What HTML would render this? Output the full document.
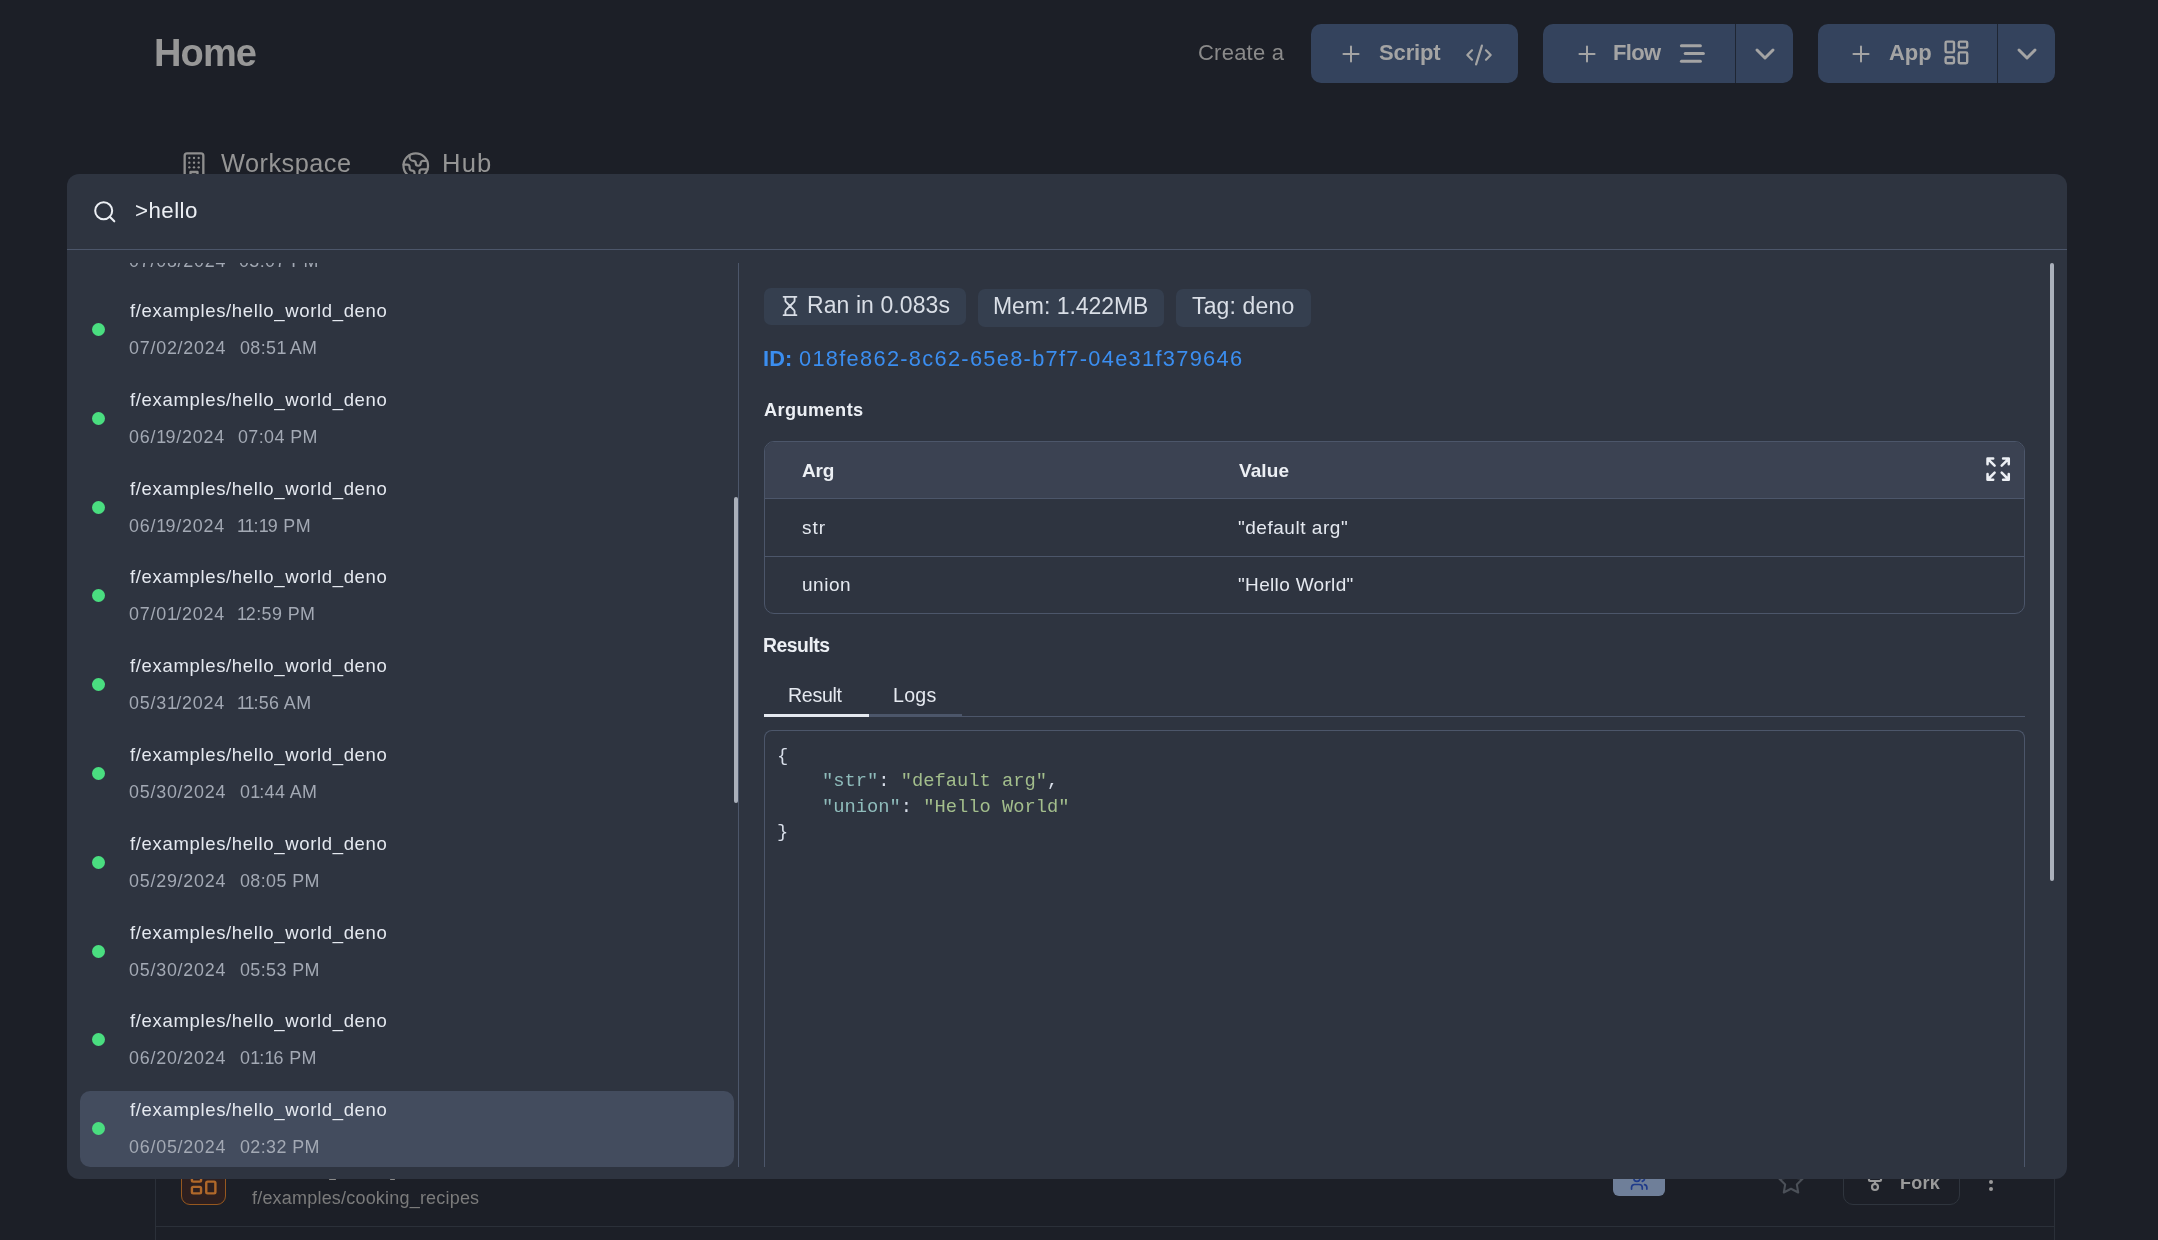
<!DOCTYPE html>
<html><head><meta charset="utf-8"><style>
html,body{margin:0;padding:0;width:2158px;height:1240px;overflow:hidden;background:#1c1f27;font-family:'Liberation Sans', sans-serif;}
.t{position:absolute;white-space:nowrap;line-height:1;will-change:transform;}
.b{position:absolute;box-sizing:border-box;}
svg.b{overflow:visible}
</style></head><body>
<div class="t" style="left:154.20px;top:34.00px;font-size:38px;color:#979797;font-weight:700;letter-spacing:-0.87px;">Home</div>
<div class="t" style="left:1198.20px;top:42.00px;font-size:22px;color:#8a8a8a;font-weight:400;letter-spacing:0.23px;">Create a</div>
<div class="b" style="left:1311px;top:24px;width:207px;height:59px;background:#34435d;border-radius:10px;"></div>
<div class="b" style="left:1543px;top:24px;width:250px;height:59px;background:#34435d;border-radius:10px;"></div>
<div class="b" style="left:1735px;top:24px;width:1px;height:59px;background:#1f2633;"></div>
<div class="b" style="left:1818px;top:24px;width:237px;height:59px;background:#34435d;border-radius:10px;"></div>
<div class="b" style="left:1997px;top:24px;width:1px;height:59px;background:#1f2633;"></div>
<svg class="b" style="left:1338.3px;top:40.6px;" width="26" height="26" viewBox="0 0 24 24" fill="none" stroke="#a4a4a4" stroke-width="1.85" stroke-linecap="round" stroke-linejoin="round"><path d="M5 12h14"/><path d="M12 5v14"/></svg>
<div class="t" style="left:1379.00px;top:42.00px;font-size:22px;color:#a4a4a4;font-weight:700;letter-spacing:-0.14px;">Script</div>
<svg class="b" style="left:1464.5px;top:40.5px;" width="28" height="28" viewBox="0 0 24 24" fill="none" stroke="#a4a4a4" stroke-width="1.9" stroke-linecap="round" stroke-linejoin="round"><path d="m18 16 4-4-4-4"/><path d="m6 8-4 4 4 4"/><path d="m14.5 4-5 16"/></svg>
<svg class="b" style="left:1573.6px;top:40.6px;" width="26" height="26" viewBox="0 0 24 24" fill="none" stroke="#a4a4a4" stroke-width="1.85" stroke-linecap="round" stroke-linejoin="round"><path d="M5 12h14"/><path d="M12 5v14"/></svg>
<div class="t" style="left:1613.18px;top:42.00px;font-size:22px;color:#a4a4a4;font-weight:700;letter-spacing:-0.67px;">Flow</div>
<svg class="b" style="left:0px;top:0px;" width="2158" height="100" viewBox="0 0 2158 100" fill="none" stroke="#a4a4a4" stroke-width="3" stroke-linecap="round" stroke-linejoin="round"><path d="M1681.4 45.7h19"/><path d="M1685.2 53.5h18.2"/><path d="M1681.4 61.3h19"/></svg>
<svg class="b" style="left:1748.5px;top:37.5px;" width="32" height="32" viewBox="0 0 24 24" fill="none" stroke="#a4a4a4" stroke-width="2.25" stroke-linecap="round" stroke-linejoin="round"><path d="m6 9 6 6 6-6"/></svg>
<svg class="b" style="left:1847.6px;top:40.6px;" width="26" height="26" viewBox="0 0 24 24" fill="none" stroke="#a4a4a4" stroke-width="1.85" stroke-linecap="round" stroke-linejoin="round"><path d="M5 12h14"/><path d="M12 5v14"/></svg>
<div class="t" style="left:1888.83px;top:42.00px;font-size:22px;color:#a4a4a4;font-weight:700;letter-spacing:-0.1px;">App</div>
<svg class="b" style="left:1941.5px;top:38px;" width="28.8" height="28.8" viewBox="0 0 24 24" fill="none" stroke="#a4a4a4" stroke-width="2" stroke-linecap="round" stroke-linejoin="round"><rect width="7" height="9" x="3" y="3" rx="1"/><rect width="7" height="5" x="14" y="3" rx="1"/><rect width="7" height="9" x="14" y="12" rx="1"/><rect width="7" height="5" x="3" y="16" rx="1"/></svg>
<svg class="b" style="left:2010.5px;top:37.5px;" width="32" height="32" viewBox="0 0 24 24" fill="none" stroke="#a4a4a4" stroke-width="2.25" stroke-linecap="round" stroke-linejoin="round"><path d="m6 9 6 6 6-6"/></svg>
<svg class="b" style="left:180px;top:151.3px;" width="28" height="28" viewBox="0 0 24 24" fill="none" stroke="#8e8e8e" stroke-width="2" stroke-linecap="round" stroke-linejoin="round"><rect width="16" height="20" x="4" y="2" rx="2" ry="2"/><path d="M9 22v-4h6v4"/><path d="M8 6h.01"/><path d="M16 6h.01"/><path d="M12 6h.01"/><path d="M12 10h.01"/><path d="M12 14h.01"/><path d="M16 10h.01"/><path d="M16 14h.01"/><path d="M8 10h.01"/><path d="M8 14h.01"/></svg>
<div class="t" style="left:221.20px;top:151.00px;font-size:25.3px;color:#959595;font-weight:400;letter-spacing:0.5px;">Workspace</div>
<svg class="b" style="left:400.5px;top:150.5px;" width="29.5" height="29.5" viewBox="0 0 24 24" fill="none" stroke="#8e8e8e" stroke-width="1.8" stroke-linecap="round" stroke-linejoin="round"><path d="M21.54 15H17a2 2 0 0 0-2 2v4.54"/><path d="M7 3.34V5a3 3 0 0 0 3 3a2 2 0 0 1 2 2c0 1.1.9 2 2 2a2 2 0 0 0 2-2c0-1.1.9-2 2-2h3.17"/><path d="M11 21.95V18a2 2 0 0 0-2-2a2 2 0 0 1-2-2v-1a2 2 0 0 0-2-2H2.05"/><circle cx="12" cy="12" r="10"/></svg>
<div class="t" style="left:441.80px;top:151.11px;font-size:25.6px;color:#959595;font-weight:400;letter-spacing:1.2px;">Hub</div>
<div class="b" style="left:155px;top:1150px;width:1px;height:90px;background:#2b3039;"></div>
<div class="b" style="left:2054px;top:1150px;width:1px;height:90px;background:#2b3039;"></div>
<div class="b" style="left:155px;top:1226px;width:1900px;height:1px;background:#2b3039;"></div>
<div class="b" style="left:181px;top:1140px;width:45px;height:65px;background:#2d1f1f;border-radius:9px;border:1px solid #97581f;"></div>
<svg class="b" style="left:188px;top:1166.4px;" width="31.3" height="31.3" viewBox="0 0 24 24" fill="none" stroke="#b0682a" stroke-width="1.85" stroke-linecap="round" stroke-linejoin="round"><rect width="7" height="9" x="3" y="3" rx="1"/><rect width="7" height="5" x="14" y="3" rx="1"/><rect width="7" height="9" x="14" y="12" rx="1"/><rect width="7" height="5" x="3" y="16" rx="1"/></svg>
<div class="t" style="left:252.00px;top:1189.01px;font-size:18px;color:#7b7b7b;font-weight:400;letter-spacing:0.2px;">f/examples/cooking_recipes</div>
<div class="b" style="left:1613px;top:1150px;width:52px;height:46px;background:#6f7f99;border-radius:6px;"></div>
<svg class="b" style="left:1630.1px;top:1173px;" width="18.4" height="18.4" viewBox="0 0 24 24" fill="none" stroke="#1e3a8a" stroke-width="2.2" stroke-linecap="round" stroke-linejoin="round"><path d="M16 21v-2a4 4 0 0 0-4-4H6a4 4 0 0 0-4 4v2"/><circle cx="9" cy="7" r="4"/><path d="M22 21v-2a4 4 0 0 0-3-3.87"/><path d="M16 3.13a4 4 0 0 1 0 7.75"/></svg>
<svg class="b" style="left:1776.9px;top:1168.3px;" width="28" height="28" viewBox="0 0 24 24" fill="none" stroke="#4b5058" stroke-width="1.75" stroke-linecap="round" stroke-linejoin="round"><polygon points="12 2 15.09 8.26 22 9.27 17 14.14 18.18 21.02 12 17.77 5.82 21.02 7 14.14 2 9.27 8.91 8.26 12 2"/></svg>
<div class="b" style="left:1843px;top:1140px;width:117px;height:65px;background:transparent;border-radius:10px;border:1px solid #2f353e;"></div>
<div class="t" style="left:1900.13px;top:1174.31px;font-size:18px;color:#9a9a9a;font-weight:700;letter-spacing:0.27px;">Fork</div>
<svg class="b" style="left:1862.9px;top:1169px;" width="24" height="24" viewBox="0 0 24 24" fill="none" stroke="#9a9a9a" stroke-width="2.2" stroke-linecap="round" stroke-linejoin="round"><circle cx="12" cy="18" r="3"/><circle cx="6" cy="6" r="3"/><circle cx="18" cy="6" r="3"/><path d="M18 9v2c0 .6-.4 1-1 1H7c-.6 0-1-.4-1-1V9"/><path d="M12 12v3"/></svg>
<div class="b" style="left:1988.8px;top:1173px;width:4.3px;height:4.3px;background:#9a9a9a;border-radius:3px;"></div>
<div class="b" style="left:1988.8px;top:1180px;width:4.3px;height:4.3px;background:#9a9a9a;border-radius:3px;"></div>
<div class="b" style="left:1988.8px;top:1187.2px;width:4.3px;height:4.3px;background:#9a9a9a;border-radius:3px;"></div>
<div class="b" style="left:329px;top:1178.6px;width:7px;height:1.6px;background:#8a8a8a;border-radius:1px;"></div>
<div class="b" style="left:390px;top:1178.6px;width:5px;height:1.6px;background:#8a8a8a;border-radius:1px;"></div>
<div class="b" style="left:67px;top:174px;width:2000px;height:1005px;background:#2e3440;border-radius:12px;"></div>
<svg class="b" style="left:91.6px;top:198.8px;" width="25.5" height="25.5" viewBox="0 0 24 24" fill="none" stroke="#eceff4" stroke-width="1.9" stroke-linecap="round" stroke-linejoin="round"><circle cx="11" cy="11" r="8"/><path d="m21 21-4.3-4.3"/></svg>
<div class="t" style="left:135.42px;top:200.21px;font-size:22.3px;color:#eceff4;font-weight:400;letter-spacing:0.46px;">&gt;hello</div>
<div class="b" style="left:67px;top:249px;width:2000px;height:1px;background:#4c566a;"></div>
<div class="b" style="left:738px;top:263px;width:1px;height:904px;background:#4c566a;"></div>
<div class="b" style="left:734px;top:497px;width:4px;height:306px;background:#aab0bb;border-radius:2px;"></div>
<div class="b" style="left:67px;top:263px;width:670px;height:904px;overflow:hidden">
<div class="t" style="left:61.60px;top:-10.51px;font-size:17.9px;color:#a3a9b4;font-weight:400;letter-spacing:0.77px;">07/08/2024</div>
<div class="t" style="left:172.20px;top:-10.51px;font-size:17.9px;color:#a3a9b4;font-weight:400;letter-spacing:0.4px;">05:07 PM</div>
<div class="b" style="left:25px;top:60.0px;width:13px;height:13px;border-radius:50%;background:#4ade80"></div>
<div class="t" style="left:62.60px;top:39.01px;font-size:18.5px;color:#e5e9f0;font-weight:400;letter-spacing:0.66px;">f/examples/hello_world_deno</div>
<div class="t" style="left:62.48px;top:77.01px;font-size:17.9px;color:#a3a9b4;font-weight:400;letter-spacing:0.77px;">07/02/2024</div>
<div class="t" style="left:172.94px;top:77.01px;font-size:17.9px;color:#a3a9b4;font-weight:400;letter-spacing:0.4px;">08:5<span style="letter-spacing:-1.10px">1</span> AM</div>
<div class="b" style="left:25px;top:148.8px;width:13px;height:13px;border-radius:50%;background:#4ade80"></div>
<div class="t" style="left:62.60px;top:127.81px;font-size:18.5px;color:#e5e9f0;font-weight:400;letter-spacing:0.66px;">f/examples/hello_world_deno</div>
<div class="t" style="left:62.48px;top:165.81px;font-size:17.9px;color:#a3a9b4;font-weight:400;letter-spacing:0.77px;">06/<span style="letter-spacing:-0.53px">1</span>9/2024</div>
<div class="t" style="left:171.10px;top:165.81px;font-size:17.9px;color:#a3a9b4;font-weight:400;letter-spacing:0.4px;">07:04 PM</div>
<div class="b" style="left:25px;top:237.6px;width:13px;height:13px;border-radius:50%;background:#4ade80"></div>
<div class="t" style="left:62.60px;top:216.60px;font-size:18.5px;color:#e5e9f0;font-weight:400;letter-spacing:0.66px;">f/examples/hello_world_deno</div>
<div class="t" style="left:62.48px;top:254.61px;font-size:17.9px;color:#a3a9b4;font-weight:400;letter-spacing:0.77px;">06/<span style="letter-spacing:-0.53px">1</span>9/2024</div>
<div class="t" style="left:170.39px;top:254.61px;font-size:17.9px;color:#a3a9b4;font-weight:400;letter-spacing:0.4px;"><span style="letter-spacing:-1.10px">1</span><span style="letter-spacing:-1.10px">1</span>:<span style="letter-spacing:-1.10px">1</span>9 PM</div>
<div class="b" style="left:25px;top:326.4px;width:13px;height:13px;border-radius:50%;background:#4ade80"></div>
<div class="t" style="left:62.60px;top:305.41px;font-size:18.5px;color:#e5e9f0;font-weight:400;letter-spacing:0.66px;">f/examples/hello_world_deno</div>
<div class="t" style="left:62.48px;top:343.40px;font-size:17.9px;color:#a3a9b4;font-weight:400;letter-spacing:0.77px;">07/0<span style="letter-spacing:-0.53px">1</span>/2024</div>
<div class="t" style="left:170.39px;top:343.40px;font-size:17.9px;color:#a3a9b4;font-weight:400;letter-spacing:0.4px;"><span style="letter-spacing:-1.10px">1</span>2:59 PM</div>
<div class="b" style="left:25px;top:415.2px;width:13px;height:13px;border-radius:50%;background:#4ade80"></div>
<div class="t" style="left:62.60px;top:394.21px;font-size:18.5px;color:#e5e9f0;font-weight:400;letter-spacing:0.66px;">f/examples/hello_world_deno</div>
<div class="t" style="left:62.48px;top:432.21px;font-size:17.9px;color:#a3a9b4;font-weight:400;letter-spacing:0.77px;">05/3<span style="letter-spacing:-0.53px">1</span>/2024</div>
<div class="t" style="left:170.39px;top:432.21px;font-size:17.9px;color:#a3a9b4;font-weight:400;letter-spacing:0.4px;"><span style="letter-spacing:-1.10px">1</span><span style="letter-spacing:-1.10px">1</span>:56 AM</div>
<div class="b" style="left:25px;top:504.0px;width:13px;height:13px;border-radius:50%;background:#4ade80"></div>
<div class="t" style="left:62.60px;top:483.01px;font-size:18.5px;color:#e5e9f0;font-weight:400;letter-spacing:0.66px;">f/examples/hello_world_deno</div>
<div class="t" style="left:62.48px;top:521.01px;font-size:17.9px;color:#a3a9b4;font-weight:400;letter-spacing:0.77px;">05/30/2024</div>
<div class="t" style="left:172.94px;top:521.01px;font-size:17.9px;color:#a3a9b4;font-weight:400;letter-spacing:0.4px;">0<span style="letter-spacing:-1.10px">1</span>:44 AM</div>
<div class="b" style="left:25px;top:592.8px;width:13px;height:13px;border-radius:50%;background:#4ade80"></div>
<div class="t" style="left:62.60px;top:571.81px;font-size:18.5px;color:#e5e9f0;font-weight:400;letter-spacing:0.66px;">f/examples/hello_world_deno</div>
<div class="t" style="left:62.48px;top:609.81px;font-size:17.9px;color:#a3a9b4;font-weight:400;letter-spacing:0.77px;">05/29/2024</div>
<div class="t" style="left:172.94px;top:609.81px;font-size:17.9px;color:#a3a9b4;font-weight:400;letter-spacing:0.4px;">08:05 PM</div>
<div class="b" style="left:25px;top:681.6px;width:13px;height:13px;border-radius:50%;background:#4ade80"></div>
<div class="t" style="left:62.60px;top:660.60px;font-size:18.5px;color:#e5e9f0;font-weight:400;letter-spacing:0.66px;">f/examples/hello_world_deno</div>
<div class="t" style="left:62.48px;top:698.61px;font-size:17.9px;color:#a3a9b4;font-weight:400;letter-spacing:0.77px;">05/30/2024</div>
<div class="t" style="left:172.94px;top:698.61px;font-size:17.9px;color:#a3a9b4;font-weight:400;letter-spacing:0.4px;">05:53 PM</div>
<div class="b" style="left:25px;top:770.4px;width:13px;height:13px;border-radius:50%;background:#4ade80"></div>
<div class="t" style="left:62.60px;top:749.41px;font-size:18.5px;color:#e5e9f0;font-weight:400;letter-spacing:0.66px;">f/examples/hello_world_deno</div>
<div class="t" style="left:62.48px;top:787.40px;font-size:17.9px;color:#a3a9b4;font-weight:400;letter-spacing:0.77px;">06/20/2024</div>
<div class="t" style="left:172.94px;top:787.40px;font-size:17.9px;color:#a3a9b4;font-weight:400;letter-spacing:0.4px;">0<span style="letter-spacing:-1.10px">1</span>:<span style="letter-spacing:-1.10px">1</span>6 PM</div>
<div class="b" style="left:13px;top:828px;width:654px;height:76px;background:#434c5e;border-radius:10px"></div>
<div class="b" style="left:25px;top:859.2px;width:13px;height:13px;border-radius:50%;background:#4ade80"></div>
<div class="t" style="left:62.60px;top:838.21px;font-size:18.5px;color:#e5e9f0;font-weight:400;letter-spacing:0.66px;">f/examples/hello_world_deno</div>
<div class="t" style="left:62.48px;top:876.21px;font-size:17.9px;color:#a3a9b4;font-weight:400;letter-spacing:0.77px;">06/05/2024</div>
<div class="t" style="left:172.94px;top:876.21px;font-size:17.9px;color:#a3a9b4;font-weight:400;letter-spacing:0.4px;">02:32 PM</div>
</div>
<div class="b" style="left:2050px;top:263px;width:4px;height:618px;background:#aab0bb;border-radius:2px;"></div>
<div class="b" style="left:764px;top:288px;width:202px;height:37px;background:#353f4f;border-radius:7px;"></div>
<svg class="b" style="left:779px;top:294px;" width="22" height="24" viewBox="0 0 24 24" fill="none" stroke="#d9dee6" stroke-width="2" stroke-linecap="round" stroke-linejoin="round"><path d="M5 22h14"/><path d="M5 2h14"/><path d="M17 22v-4.172a2 2 0 0 0-.586-1.414L12 12l-4.414 4.414A2 2 0 0 0 7 17.828V22"/><path d="M7 2v4.172a2 2 0 0 0 .586 1.414L12 12l4.414-4.414A2 2 0 0 0 17 6.172V2"/></svg>
<div class="t" style="left:806.52px;top:294.01px;font-size:23px;color:#d9dee6;font-weight:400;letter-spacing:0.08px;">Ran in 0.083s</div>
<div class="b" style="left:978px;top:289px;width:186px;height:38px;background:#353f4f;border-radius:7px;"></div>
<div class="t" style="left:992.60px;top:295.41px;font-size:23px;color:#d9dee6;font-weight:400;letter-spacing:-0.05px;">Mem: 1.422MB</div>
<div class="b" style="left:1176px;top:289px;width:135px;height:38px;background:#353f4f;border-radius:7px;"></div>
<div class="t" style="left:1192.10px;top:295.41px;font-size:23px;color:#d9dee6;font-weight:400;letter-spacing:0.15px;">Tag: deno</div>
<div class="t" style="left:762.80px;top:348.00px;font-size:21.8px;color:#3b8ef0;font-weight:700;letter-spacing:0.1px;">ID:</div>
<div class="t" style="left:798.74px;top:348.00px;font-size:21.8px;color:#3b8ef0;font-weight:400;letter-spacing:1.3px;">018fe862-8c62-65e8-b7f7-04e31f379646</div>
<div class="t" style="left:763.80px;top:401.01px;font-size:18.2px;color:#eceff4;font-weight:700;letter-spacing:0.4px;">Arguments</div>
<div class="b" style="left:764px;top:441px;width:1261px;height:173px;background:transparent;border-radius:10px;border:1px solid #4c566a;overflow:hidden"></div>
<div class="b" style="left:765px;top:442px;width:1259px;height:56px;background:#3b4252;border-radius:9px 9px 0 0"></div>
<div class="b" style="left:765px;top:498px;width:1259px;height:1px;background:#4c566a;"></div>
<div class="b" style="left:765px;top:556px;width:1259px;height:1px;background:#4c566a;"></div>
<div class="t" style="left:801.80px;top:460.80px;font-size:19px;color:#eceff4;font-weight:700;letter-spacing:-0.2px;">Arg</div>
<div class="t" style="left:1238.60px;top:460.80px;font-size:19px;color:#eceff4;font-weight:700;letter-spacing:0.08px;">Value</div>
<svg class="b" style="left:1983.9px;top:454.9px;" width="28.3" height="28.3" viewBox="0 0 24 24" fill="none" stroke="#eceff4" stroke-width="2.15" stroke-linecap="round" stroke-linejoin="round"><path d="m21 21-6-6m6 6v-4.8m0 4.8h-4.8"/><path d="M3 16.2V21m0 0h4.8M3 21l6-6"/><path d="M21 7.8V3m0 0h-4.8M21 3l-6 6"/><path d="M3 7.8V3m0 0h4.8M3 3l6 6"/></svg>
<div class="t" style="left:801.80px;top:518.01px;font-size:19px;color:#e5e9f0;font-weight:400;letter-spacing:1.0px;">str</div>
<div class="t" style="left:1237.60px;top:518.01px;font-size:19px;color:#e5e9f0;font-weight:400;letter-spacing:0.53px;">"default arg"</div>
<div class="t" style="left:802.00px;top:575.21px;font-size:19px;color:#e5e9f0;font-weight:400;letter-spacing:0.55px;">union</div>
<div class="t" style="left:1237.60px;top:575.21px;font-size:19px;color:#e5e9f0;font-weight:400;letter-spacing:0.33px;">"Hello World"</div>
<div class="t" style="left:763.00px;top:635.50px;font-size:19.4px;color:#eceff4;font-weight:700;letter-spacing:-0.5px;">Results</div>
<div class="t" style="left:787.65px;top:686.41px;font-size:19.6px;color:#e5e9f0;font-weight:400;letter-spacing:-0.3px;">Result</div>
<div class="t" style="left:893.40px;top:686.41px;font-size:19.6px;color:#e5e9f0;font-weight:400;letter-spacing:0.27px;">Logs</div>
<div class="b" style="left:764px;top:716px;width:1261px;height:1px;background:#4c566a;"></div>
<div class="b" style="left:869px;top:714px;width:93px;height:3px;background:#4c566a;"></div>
<div class="b" style="left:764px;top:714px;width:105px;height:3px;background:#e5e9f0;"></div>
<div class="b" style="left:764px;top:730px;width:1261px;height:437px;background:transparent;border:1px solid #4c566a;border-bottom:none;border-radius:8px 8px 0 0"></div>
<div class="t" style="left:777px;top:744px;font-family:'Liberation Mono', monospace;font-size:18.75px;line-height:25.4px"><span style="color:#d8dee9">{</span><br>&nbsp;&nbsp;&nbsp;&nbsp;<span style="color:#8fbcbb">"str"</span><span style="color:#d8dee9">: </span><span style="color:#a3be8c">"default arg"</span><span style="color:#d8dee9">,</span><br>&nbsp;&nbsp;&nbsp;&nbsp;<span style="color:#8fbcbb">"union"</span><span style="color:#d8dee9">: </span><span style="color:#a3be8c">"Hello World"</span><br><span style="color:#d8dee9">}</span></div>
</body></html>
